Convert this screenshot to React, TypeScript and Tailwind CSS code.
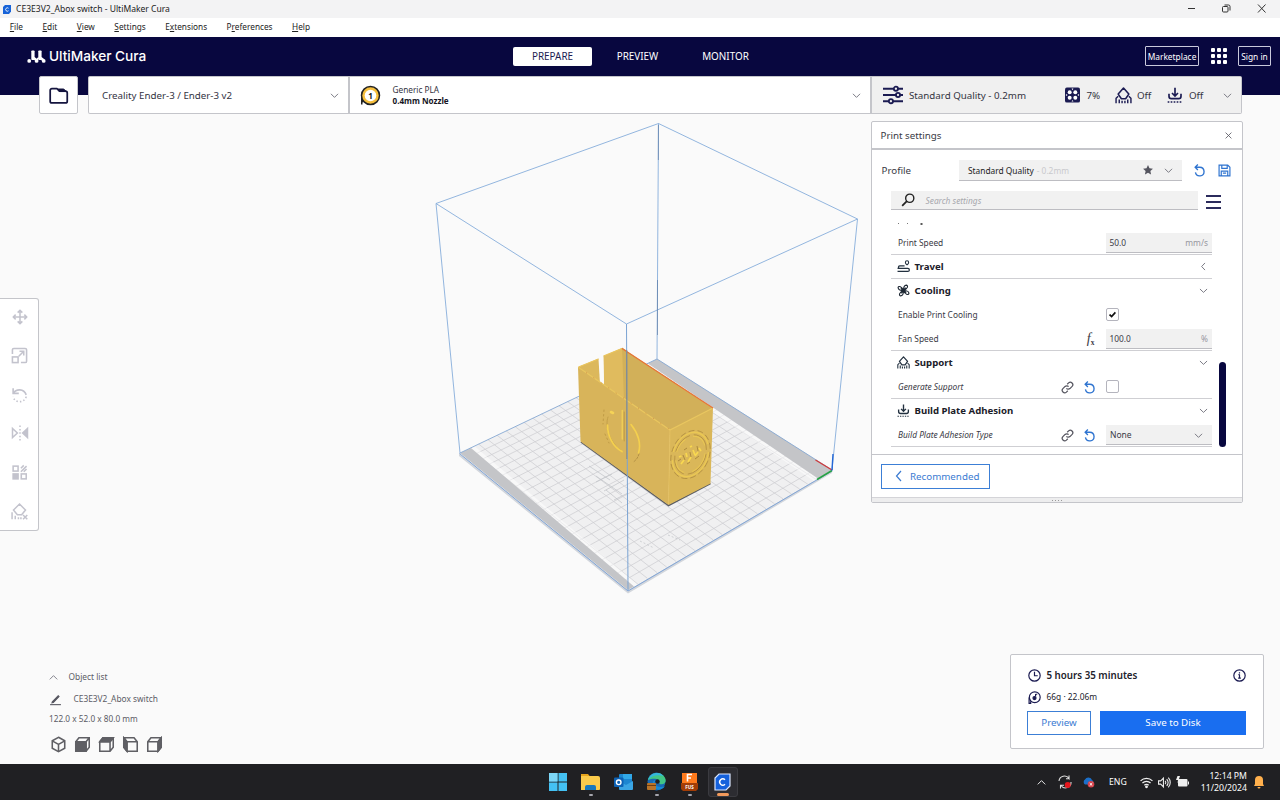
import type { ReactNode } from 'react';

type Pt = [number, number];

/* ---------- build plate projection ---------- */
const L: Pt = [460, 453];
const B: Pt = [657, 359];
const R: Pt = [832, 470];
const F: Pt = [628, 590];

const dx1 = B[0] - R[0], dx2 = F[0] - R[0], dx3 = L[0] - B[0] + R[0] - F[0];
const dy1 = B[1] - R[1], dy2 = F[1] - R[1], dy3 = L[1] - B[1] + R[1] - F[1];
const det = dx1 * dy2 - dx2 * dy1;
const g = (dx3 * dy2 - dx2 * dy3) / det;
const h = (dx1 * dy3 - dx3 * dy1) / det;
const proj = (u: number, v: number): Pt => {
  const w = g * u + h * v + 1;
  return [
    ((B[0] - L[0] + g * B[0]) * u + (F[0] - L[0] + h * F[0]) * v + L[0]) / w,
    ((B[1] - L[1] + g * B[1]) * u + (F[1] - L[1] + h * F[1]) * v + L[1]) / w,
  ];
};
const seg = (a: Pt, b: Pt) => `M${a[0].toFixed(1)} ${a[1].toFixed(1)}L${b[0].toFixed(1)} ${b[1].toFixed(1)}`;

const N = 23;
const gridPath = Array.from({ length: N - 1 }, (_, i) => (i + 1) / N)
  .map((t) => seg(proj(t, 0), proj(t, 1)) + seg(proj(0, t), proj(1, t)))
  .join('');

function Scene() {
  return (
    <svg className="absolute left-0 top-0" width="1280" height="764" viewBox="0 0 1280 764">
      <polygon points="459,453 628,590 832,470 832,473 628,593.500 459,456" fill="#d2d6dc" />
      <polygon points="460,453 657,359 832,470 628,590" fill="#f0f0f1" />
      <path d={gridPath} stroke="#cdced1" strokeWidth=".75" fill="none" />
      <polygon points="471,448.500 475,446.500 637.500,584.500 634,586.500" fill="#ffffff" opacity=".5" />
      <polygon points="648,363.500 644,365.500 814,481 818,478.500" fill="#ffffff" opacity=".5" />
      <polygon points="460,453 471,448 634,586.500 628,590" fill="#c4c5c8" />
      <polygon points="657,359 648,363.500 818,478.500 832,470" fill="#c4c5c8" />
      <path d="M460 453L657 359L832 470" stroke="#86a8d3" strokeWidth=".9" fill="none" />

      <g stroke="#7fa9d9" strokeWidth=".85" fill="none">
        <path d="M436 203.500L658.500 123.500L857.500 219L626.500 324Z" />
        <path d="M436 203.500L460 453M857.500 219L832 470" />
        <path d="M658.500 123.500L657 359" />
      </g>
      <path d="M658.400 125V160M657.500 280V335" stroke="#4f6f99" strokeWidth=".8" opacity=".7" />

      {/* contact shadow on the plate */}
      <g stroke="#bfc1c6" strokeWidth=".7" fill="none">
        <path d="M589 466L610 480M596 476L622 494M606 490L622 503M596 482L612 474M604 491L624 480M614 500L628 493" />
        <path d="M640 541L654 548M668 535L680 540" strokeDasharray="2 2" />
      </g>
      <path d="M581 442L668.500 505.500L710.500 483.500" stroke="#5a5c62" strokeWidth="1.500" fill="none" />

      {/* inner walls */}
      <polygon points="578.500,367 598.500,358.500 600,384 578.500,370" fill="#dcb85c" />
      <polygon points="603.500,356 622,348 626,352 626,402 604,388" fill="#e0bb5e" />
      <polygon points="622,348 713,408 670,431 624,402" fill="#d2b059" />
      <polygon points="599,359 603,357 604,385 600.500,382.500" fill="#fafafa" />
      <path d="M622 348L626.500 351V400" stroke="#bd9b4c" strokeWidth=".9" fill="none" />

      {/* outer faces */}
      <polygon points="578,367 670,430 668.500,505 580.500,441.500" fill="#d8b45a" />
      <polygon points="670,430 713,408 710.500,483.500 668.500,505" fill="#dab759" />
      <path d="M578.300 367.300L670 430L713 408" stroke="#e9c65f" strokeWidth="1.300" fill="none" />
      <path d="M578.500 367L598.500 359M603.500 356L622 348.500" stroke="#e9c45d" strokeWidth="1.300" fill="none" />
      <path d="M670 430L668.500 504" stroke="#e4c060" strokeWidth=".9" />
      <path d="M622 348.500L713 408" stroke="#e77438" strokeWidth="1.300" />
      <path d="M586 372.500L669 429" stroke="#b8502c" strokeWidth=".7" strokeDasharray="1 8" opacity=".6" />

      {/* power symbol */}
      <g fill="none" strokeLinecap="round">
        <path d="M608 417C604.500 426 610 443 621 450.500" stroke="#c09c46" strokeWidth=".9" />
        <path d="M607.500 425C607.500 436 613 447 622 451.500" stroke="#f4d04e" strokeWidth="1.700" />
        <path d="M631 424.500C638 433 641.500 444 638.500 453" stroke="#f4d04e" strokeWidth="1.600" />
        <path d="M639 454Q637.500 459 634 461.500" stroke="#a98840" strokeWidth=".8" strokeDasharray="2 1.500" />
        <path d="M622.300 410.500V439" stroke="#efcd57" strokeWidth="1.500" />
        <path d="M624.200 412V441" stroke="#ba9743" strokeWidth=".9" />
        <path d="M611 412L613 413" stroke="#f5d357" strokeWidth="2.600" />
        <path d="M604 410L603 424M605 434L609 443" stroke="#b99440" strokeWidth=".8" strokeDasharray="1.500 3" />
      </g>

      {/* round emblem */}
      <g fill="none" transform="rotate(24 690.500 454.500)">
        <ellipse cx="690.500" cy="454.500" rx="18.500" ry="25" stroke="#b08d40" strokeWidth=".8" strokeDasharray="6 3" />
        <ellipse cx="690.500" cy="454.500" rx="17" ry="23" stroke="#ebc853" strokeWidth="1.400" strokeDasharray="50 8" />
        <ellipse cx="690.500" cy="454.500" rx="14.800" ry="20.500" stroke="#b5913f" strokeWidth=".8" strokeDasharray="22 4" />
        <ellipse cx="690.500" cy="454.500" rx="13.800" ry="19" stroke="#ebc853" strokeWidth=".9" strokeDasharray="16 8" />
      </g>
      <path d="M679 457l2.500-1M681 464l3-4M686 453l1 4M688 462l3-5M693 450l2 5M695 456l3-4M699 448l2 3M690 447l2-1" stroke="#f9d850" strokeWidth="1.700" fill="none" />
      <path d="M678 461l3-2M683 455l2 5M687 464l3-2M690 452l1 5M695 459l4-3M697 446l1 5M684 450l3-2" stroke="#a17f37" strokeWidth=".8" fill="none" />

      {/* front edge, origin axes */}
      <path d="M626.500 324L628 590" stroke="#7aa3d3" strokeWidth="1" />
      <path d="M626.800 350V459" stroke="#77777a" strokeWidth="1" opacity=".65" />
      <path d="M459.500 453.500L628 591L832 471" stroke="#779fd6" strokeWidth=".9" fill="none" />
      <path d="M832 470L815.500 460" stroke="#d13a3a" strokeWidth="1.300" />
      <path d="M832 470.500L817 479.500" stroke="#27a344" strokeWidth="1.500" />
      <path d="M832 470.500L833 454" stroke="#2467d6" strokeWidth="1.400" />
    </svg>
  );
}

/* ---------- icons ---------- */
function Icon({ size = 12, w = 1.5, vb = 24, color = 'currentColor', className = '', children }: {
  size?: number; w?: number; vb?: number; color?: string; className?: string; children: ReactNode;
}) {
  return (
    <svg className={`shrink-0 ${className}`} width={size} height={size} viewBox={`0 0 ${vb} ${vb}`} fill="none" stroke={color} strokeWidth={w}>
      {children}
    </svg>
  );
}
const ChevDown = ({ size = 9, className = '' }) => (
  <Icon size={size} w={2.4} color="#6d6d78" className={className}><path d="M2.500 7.500l9.500 9.500 9.500-9.500" /></Icon>
);
const SupportIcon = ({ size = 18, color = '#1b1b52' }) => (
  <Icon size={size} w={2.2} color={color}>
    <path d="M12 1.500l7.500 8.500-4.500 6.500H9L4.500 10z" strokeLinejoin="round" />
    <path d="M1.500 23v-7l3-3M22.500 23v-7l-3-3M6 17.500V23M10 19.500V23M14 19.500V23M18 17.500V23" strokeWidth="2" />
  </Icon>
);
const AdhesionIcon = ({ size = 18, color = '#1b1b52' }) => (
  <Icon size={size} w={2.5} color={color}>
    <path d="M12 1v12M7.500 9L12 13.500 16.500 9M3 10v4q0 3.500 3.500 3.500h11q3.500 0 3.500-3.500v-4" />
    <path d="M1 22.500h22" strokeDasharray="2.500 2" strokeWidth="2" />
  </Icon>
);
const Reset = ({ size = 13, color = '#2f74d0' }) => (
  <Icon size={size} w={2.5} color={color}>
    <path d="M9 1L4 6 9 11M4.500 6H12.500a8 8 0 1 1-8 9.500" />
  </Icon>
);
const LinkIcon = () => (
  <Icon size={13} w={2.3} color="#55555f">
    <path d="M10 13.500a4.500 4.500 0 0 0 6.500.5l4-4a4.600 4.600 0 0 0-6.500-6.500l-2.500 2.500M14 10.500a4.500 4.500 0 0 0-6.500-.5l-4 4A4.600 4.600 0 0 0 10 20.500l2.500-2.500" />
  </Icon>
);
const TravelIcon = () => (
  <Icon size={13} w={2.4} color="#22303f">
    <path d="M18.500 9c-2-1.500-3-2.500-3-4.500a3 3 0 0 1 6 0c0 2-1 3-3 4.500z" strokeWidth="2" />
    <path d="M14 11H5a2.200 2.200 0 0 0 0 4.500h15a2.500 2.500 0 0 1 0 5.500H1M1 15.500h5" />
  </Icon>
);
const FanIcon = () => (
  <Icon size={13} w={2.1} color="#1d2733">
    <path d="M12 12C7 12 2 11 2 6.500 3 3 9 4 12 12zM12 12c0-5 1-10 5.500-10C21 3 20 9 12 12zM12 12c5 0 10 1 10 5.500-1 3.500-7 2.500-10-5.500zM12 12c0 5-1 10-5.500 10C3 21 4 15 12 12z" />
    <path d="M7 8l10 8M16 7L8 17" strokeWidth="2.600" />
  </Icon>
);

/* ---------- top area ---------- */
const menus: [string, string, string][] = [
  ['', 'F', 'ile'], ['', 'E', 'dit'], ['', 'V', 'iew'], ['', 'S', 'ettings'],
  ['E', 'x', 'tensions'], ['P', 'r', 'eferences'], ['', 'H', 'elp'],
];

function WindowChrome() {
  return (
    <>
      <div className="flex h-[18px] items-center bg-[#f3f3f4] pl-[3px] text-[8.550px] text-[#222]">
        <svg width="8" height="9" viewBox="0 0 16 18"><path d="M4 0h12v13l-4 5H0V4z" fill="#1763d8" /><path d="M11 6.500a3.400 3.400 0 1 0 0 5" stroke="#fff" strokeWidth="1.800" fill="none" /></svg>
        <span className="ml-[5px]">CE3E3V2_Abox switch - UltiMaker Cura</span>
        <div className="ml-auto flex w-[92px] items-center pb-px">
          <svg width="78" height="9" viewBox="0 0 78 9" fill="none" stroke="#333" strokeWidth="1">
            <path d="M0 4.500h7M70 .5l7.500 8M77.500 .5l-7.500 8" />
            <rect x="34.500" y="2.500" width="5.500" height="5.500" rx="1" /><path d="M36.500 1h4a1.500 1.500 0 0 1 1.500 1.500v4" />
          </svg>
        </div>
      </div>
      <div className="flex h-[19px] items-center gap-[19.500px] bg-white pl-[9.800px] text-[8.250px] text-[#222]">
        {menus.map(([a, b, c]) => (
          <span key={b + c}>{a}<u className="underline-offset-1">{b}</u>{c}</span>
        ))}
      </div>
    </>
  );
}

function Header() {
  return (
    <div className="flex h-[58px] items-start bg-[#08073f] text-white">
      <div className="flex h-[39px] w-[513px] items-center pl-[27px]">
        <svg width="19" height="13" viewBox="0 0 19 13" fill="#fff">
          <circle cx="2.200" cy="10.900" r="1.900" />
          <circle cx="9.600" cy="10.900" r="1.900" />
          <circle cx="16.700" cy="10.900" r="1.900" />
          <rect x="4.300" y=".5" width="3.300" height="9.500" rx=".8" />
          <rect x="11.300" y=".5" width="3.300" height="9.500" rx=".8" />
          <path d="M5 8.500l2.600-1.500 3 2.500-1 2zM12 8.500l2.600-1.500 2.800 2.300-1 2.500zM8.800 9.500l2.500-2.500.8 1.500-1.600 2z" />
        </svg>
        <span className="ml-[3px] font-['Inter',sans-serif] text-[13.650px] font-medium tracking-[-0.020px]">UltiMaker Cura</span>
      </div>
      <div className="flex h-[39px] items-center text-[9.900px]">
        <span className="flex h-[19px] w-[79px] items-center justify-center rounded-[2px] bg-white text-[#1b1b52]">PREPARE</span>
        <span className="flex w-[91px] justify-center">PREVIEW</span>
        <span className="flex w-[85px] justify-center">MONITOR</span>
      </div>
      <div className="ml-auto flex h-[38px] items-center pr-[9px] text-[8.400px]">
        <span className="flex h-[20px] w-[54px] items-center justify-center rounded-[1px] border border-[#c9c9dc] pt-[2px]">Marketplace</span>
        <div className="ml-[12px] grid grid-cols-3 gap-[2px]">
          {Array.from({ length: 9 }, (_, i) => <i key={i} className="size-[4px] rounded-[1px] bg-white" />)}
        </div>
        <span className="ml-[11px] flex h-[20px] w-[33px] items-center justify-center rounded-[1px] border border-[#c9c9dc] pt-[2px]">Sign in</span>
      </div>
    </div>
  );
}

function Toolbar() {
  return (
    <div className="relative -mt-[19px] ml-[39px] flex h-[38px] w-[1203px] text-[9.750px] text-[#33333f]">
      <div className="flex w-[39px] items-center justify-center rounded-[2px] border border-[#c4c5ca] bg-white">
        <Icon size={21} w={2} color="#15153f"><path d="M2.500 6a2 2 0 0 1 2-2H10l3 3h7a2 2 0 0 1 2 2v9.500a2 2 0 0 1-2 2H4.500a2 2 0 0 1-2-2z" /><path d="M10.500 4.500h7.500l3 3h-7.500z" fill="#15153f" strokeWidth="1" /></Icon>
      </div>
      <div className="ml-[9.500px] flex w-[262px] items-center rounded-l-[2px] border border-r-2 border-[#c4c5ca] bg-white pl-[13.500px] pr-[9px]">
        <span className="pt-[2px]">Creality Ender-3 / Ender-3 v2</span><ChevDown className="ml-auto" />
      </div>
      <div className="flex w-[522px] items-center border-y border-r-2 border-[#c4c5ca] bg-white pl-[10px] pr-[8.500px]">
        <svg width="21" height="21" viewBox="0 0 21 21">
          <path d="M1 19.500V10h3v6.500L2.500 17.500v2z" fill="#222" /><circle cx="10.500" cy="10.500" r="9" fill="#f6bf3c" stroke="#222" strokeWidth="1.500" />
          <circle cx="10.500" cy="10.500" r="5.800" fill="#fff" /><text x="10.500" y="13.500" textAnchor="middle" fontSize="8" fontWeight="700" fill="#111">1</text>
        </svg>
        <div className="ml-[12px] flex flex-col text-[8.250px] leading-[11px]"><span>Generic PLA</span><b className="text-[8.100px] text-[#15151f]">0.4mm Nozzle</b></div>
        <ChevDown className="ml-auto" />
      </div>
      <div className="flex flex-1 items-center rounded-r-[2px] border border-l-0 border-[#c4c5ca] bg-[#f0f0f0] pl-[11px] pr-[9.500px]">
        <Icon size={20} w={2.2} color="#1b1b52"><path d="M0 4.500h13M18 4.500h6M0 12h16M20.500 12H24M0 19.500h7M12 19.500h12" /><circle cx="15.500" cy="4.500" r="2.500" /><circle cx="18" cy="12" r="2.500" /><circle cx="9.500" cy="19.500" r="2.500" /></Icon>
        <span className="ml-[6.500px] pt-[2px]">Standard Quality - 0.2mm</span>
        <div className="ml-auto flex items-center">
          <svg width="15" height="16" viewBox="0 0 16 16"><rect width="16" height="16" rx="2" fill="#1b1b52" /><g fill="#fff"><circle cx="5" cy="5" r="2.100" /><circle cx="11" cy="5" r="2.100" /><circle cx="5" cy="11" r="2.100" /><circle cx="11" cy="11" r="2.100" /><path d="M7 1h2L8 2.800zM7 15h2l-1-1.800zM1 7v2l1.800-1zM15 7v2l-1.800-1z" /></g></svg>
          <span className="ml-[6.500px] w-[28px] pt-[2px]">7%</span>
          <SupportIcon size={17} /><span className="ml-[5.500px] w-[30px] pt-[2px]">Off</span>
          <AdhesionIcon size={16} /><span className="ml-[6px] w-[33.500px] pt-[2px]">Off</span>
          <ChevDown />
        </div>
      </div>
    </div>
  );
}

/* ---------- left tool strip ---------- */
function ToolStrip() {
  const c = '#c3c3cd';
  return (
    <div className="mt-[184px] flex h-[233px] w-[39px] flex-col items-center justify-between rounded-r-[3px] border border-l-0 border-[#c4c5ca] bg-white py-[10px] pl-px">
      <Icon size={16} w={2.3} color={c}><path d="M12 2v20M2 12h20M8.500 5.500L12 2l3.500 3.500M8.500 18.500L12 22l3.500-3.500M5.500 8.500L2 12l3.500 3.500M18.500 8.500L22 12l-3.500 3.500" /></Icon>
      <Icon size={17} w={2.2} color={c}><path d="M2 10V4a2 2 0 0 1 2-2h16a2 2 0 0 1 2 2v16a2 2 0 0 1-2 2h-6" /><rect x="2" y="14" width="8" height="8" /><path d="M11 13l7-7M12 6h6v6" /></Icon>
      <Icon size={17} w={2.3} color={c}><path d="M3 3v7.500h8M3.500 10C7 4 18 3 21.500 12.500" /><path d="M21.500 15C19 24 6 25 2.500 15" strokeDasharray="2 3" /></Icon>
      <Icon size={18} w={2} color={c}><path d="M2 6v12l6.500-6z" /><path d="M22 6v12l-6.500-6z" fill={c} /><path d="M12 2v20" strokeDasharray="2 2.500" /></Icon>
      <Icon size={17} w={2.2} color={c}><rect x="3" y="3" width="7" height="7" /><rect x="3" y="14" width="7" height="7" fill={c} /><rect x="14.500" y="14" width="7" height="7" /><path d="M14 6l4-4M14 11l8-8M18 11l4-4" /></Icon>
      <Icon size={17} w={2.1} color={c}><path d="M12 1.500l8.500 8.500-5.500 6.500H9L3.500 10z" /><path d="M1.500 13v10M6 18v5M10.500 20v3M14 20v3M17 17l6 6M23 17l-6 6" /></Icon>
    </div>
  );
}

function ObjectInfo() {
  const hex = 'M12 1.800l8.800 5v10.400l-8.800 5-8.800-5V6.800z';
  const box = 'M2.500 8L7 2.500h14.500V16L17 21.500H2.500zM2.500 8H17v13.500M17 8l4.500-5.500';
  const c = '#5f5f64';
  return (
    <div className="ml-[49px] mt-auto flex flex-col pb-[12px] text-[8.350px] text-[#5c5c66]">
      <div className="flex h-[22px] items-center"><Icon size={9} w={2.200} color="#6d6d78"><path d="M2 17l10-10 10 10" /></Icon><span className="ml-[10.500px]">Object list</span></div>
      <div className="flex h-[22px] items-center"><Icon size={13} w={2} color="#55555f"><path d="M2 21.500h20" /><path d="M6 16.500L17 5l1.500 1.500L8 17.500l-2.500.500z" fill="#55555f" /></Icon><span className="ml-[11.500px]">CE3E3V2_Abox switch</span></div>
      <div className="flex h-[18px] items-center text-[8.250px]">122.0 x 52.0 x 80.0 mm</div>
      <div className="ml-px mt-[8px] flex h-[16px] items-center gap-[7px]">
        <Icon size={17} w={2.200} color={c}><path d={hex} /><path d="M3.200 6.800l8.800 5 8.800-5M12 11.800v10" /></Icon>
        <Icon size={17} w={2.200} color={c}><path d="M2.500 8H17v13.500H2.500z" fill={c} /><path d={box} /></Icon>
        <Icon size={17} w={2.200} color={c}><path d="M2.500 8L7 2.500h14.500L17 8z" fill={c} /><path d={box} /></Icon>
        <Icon size={17} w={2.200} color={c}><path d="M2.500 2.500H17L21.500 8v13.500H7L2.500 16zM7 21.500V8h14.500M7 8L2.500 2.500" /><path d="M2.500 2.500L7 8v13.500L2.500 16z" fill={c} /></Icon>
        <Icon size={17} w={2.200} color={c}><path d="M17 8l4.500-5.500V16L17 21.500z" fill={c} /><path d={box} /></Icon>
      </div>
    </div>
  );
}

/* ---------- print settings ---------- */
const rowCls = 'flex h-[24px] items-center';
function Group({ icon, title, open = true, line = false }: { icon: ReactNode; title: string; open?: boolean; line?: boolean }) {
  return (
    <div className={`${rowCls} border-b pl-[5.500px] pr-[4px] ${line ? 'border-[#cfcfd3]' : 'border-transparent'}`}>
      {icon}<b className="ml-[5px] pt-px text-[9.650px] text-[#1b2029]">{title}</b>
      <Icon size={9} w={2.4} color="#6d6d78" className="ml-auto"><path d={open ? 'M2.500 8l9.500 9 9.500-9' : 'M16 2.500L7 12l9 9.500'} /></Icon>
    </div>
  );
}
function Setting({ label, italic = false, extra, line = false, children }: { label: string; italic?: boolean; extra?: ReactNode; line?: boolean; children: ReactNode }) {
  return (
    <div className={`${rowCls} border-b pl-[7px] ${line ? 'border-[#cfcfd3]' : 'border-transparent'}`}>
      <span className={`pt-[2px] ${italic ? 'italic' : ''}`}>{label}</span>
      <div className="ml-auto flex items-center gap-[9.500px] pr-[9px] pt-px">{extra}</div>
      <div className="flex w-[107px] items-center pl-[.5px]">{children}</div>
    </div>
  );
}
const Field = ({ value, unit }: { value: string; unit: string }) => (
  <div className="flex h-[20px] w-full items-center justify-between border-b-[1.500px] border-[#bdbdc2] bg-[#f1f1f1] pl-[4px] pr-[4px] pt-[2px]">
    <span>{value}</span><span className="text-[#97979f]">{unit}</span>
  </div>
);
const Check = ({ on = false }) => (
  <span className="flex size-[13px] items-center justify-center rounded-[2px] border border-[#b4b4bd] bg-white">
    {on && <Icon size={7} w={6} color="#111"><path d="M2 12l7 7L22 5" /></Icon>}
  </span>
);

function PrintSettings() {
  return (
    <div className="mt-[7px] flex h-[382px] w-[372px] flex-col rounded-[2px] border border-[#c4c5ca] bg-white text-[8.350px] text-[#3a3a45]">
      <div className="flex h-[28px] items-center border-b-2 border-[#c4c5ca] pl-[8.500px] pr-[10px] text-[9.750px]">
        <span className="pt-[2px]">Print settings</span>
        <Icon size={7} w={2.800} color="#55555f" className="ml-auto"><path d="M2 2l20 20M22 2L2 22" /></Icon>
      </div>
      <div className="mt-[10px] flex h-[21px] items-center pl-[9.500px]">
        <span className="w-[77.500px] pt-[2px] text-[9.750px]">Profile</span>
        <div className="flex h-[21px] w-[223px] items-center border-b border-[#bdbdc2] bg-[#f1f1f1] pl-[9px] pr-[9.500px]">
          <span className="pt-[2px] text-[8.350px] text-[#222]">Standard Quality</span><span className="ml-[3px] pt-[2px] text-[8.350px] text-[#c9c9cd]">- 0.2mm</span>
          <svg className="ml-auto" width="10" height="9.500" viewBox="0 0 24 23"><path d="M12 0l3.600 7.800 8.400 1-6.200 5.800 1.600 8.400L12 18.900 4.600 23l1.600-8.400L0 8.800l8.400-1z" fill="#55555f" /></svg>
          <ChevDown className="ml-[11px]" />
        </div>
        <div className="ml-[11px] flex items-center gap-[11.500px]"><Reset />
          <Icon size={13} w={2.200} color="#2f74d0"><path d="M2 2h16l4 4v16H2zM7 2v6h10V2M6 22v-9h12v9M9 17h6" /></Icon></div>
      </div>
      <div className="mt-[10px] flex h-[19px] items-center pl-[19px]">
        <div className="flex h-[19px] w-[307px] items-center border-b border-[#bdbdc2] bg-[#f1f1f1] pl-[10px]">
          <Icon size={14} w={2.400} color="#222"><circle cx="15" cy="9" r="7" /><path d="M10 14l-8 8" strokeWidth="3" /></Icon>
          <span className="ml-[10.500px] pt-[2px] italic text-[#a8a8ae]">Search settings</span>
        </div>
        <div className="ml-[8px] mt-[2px] flex w-[15px] flex-col gap-[4px]"><i className="h-[2px] bg-[#2b2b5c]" /><i className="h-[2px] bg-[#2b2b5c]" /><i className="h-[2px] bg-[#2b2b5c]" /></div>
      </div>
      <div className="flex flex-1 pl-[19px]">
        <div className="w-[321px]">
          <svg className="block" width="40" height="21" viewBox="0 0 40 21"><path d="M7 13.500h1M16 13.500h1" stroke="#777" /><path d="M29.500 14h2" stroke="#222" strokeWidth="1.500" /></svg>
          <Setting label="Print Speed" line><Field value="50.0" unit="mm/s" /></Setting>
          <Group icon={<TravelIcon />} title="Travel" open={false} line />
          <Group icon={<FanIcon />} title="Cooling" />
          <Setting label="Enable Print Cooling"><Check on /></Setting>
          <Setting label="Fan Speed" line extra={<span className="pr-[1.500px] font-['Liberation_Serif',serif] text-[14px] italic leading-none">f<sub className="text-[7.500px] font-bold not-italic">x</sub></span>}><Field value="100.0" unit="%" /></Setting>
          <Group icon={<SupportIcon size={13} color="#22303f" />} title="Support" />
          <Setting label="Generate Support" italic line extra={<><LinkIcon /><Reset /></>}><Check /></Setting>
          <Group icon={<AdhesionIcon size={13} color="#22303f" />} title="Build Plate Adhesion" />
          <Setting label="Build Plate Adhesion Type" italic line extra={<><LinkIcon /><Reset /></>}>
            <div className="flex h-[20px] w-full items-center justify-between border-b border-[#bdbdc2] bg-[#f1f1f1] pl-[4.500px] pr-[9px] pt-[2px] text-[8.500px]"><span>None</span><ChevDown /></div>
          </Setting>
        </div>
        <i className="ml-[7px] mt-[152px] h-[85px] w-[7px] rounded-full bg-[#08073f]" />
      </div>
      <div className="flex h-[43px] items-center border-t border-[#c4c5ca] pl-[9px]">
        <div className="flex h-[25px] w-[109px] items-center border border-[#3c7fd6] pl-[11px] text-[9.750px] text-[#3b7bd2]">
          <Icon size={12} w={2.400}><path d="M16 2L7 12l9 10" /></Icon><span className="ml-[5px] pt-[2px]">Recommended</span>
        </div>
      </div>
      <div className="flex h-[5px] items-center justify-center gap-[2px] border-t border-[#d4d4d8] bg-[#ededee]">
        {[0, 1, 2, 3].map((i) => <i key={i} className="size-px bg-[#999]" />)}
      </div>
    </div>
  );
}

function SavePanel() {
  return (
    <div className="mb-[15px] ml-[139px] mt-auto flex h-[95px] w-[254px] flex-col rounded-[2px] border border-[#c4c5ca] bg-white pl-[16px] pr-[17px] pt-[10px] text-[#22222c]">
      <div className="flex h-[20px] items-center pl-px">
        <Icon size={13} w={2.200} color="#1b1b52"><circle cx="12" cy="12" r="10.500" /><path d="M12 5v7.500h6" /></Icon>
        <b className="ml-[5.500px] pt-[2px] text-[9.750px] font-semibold">5 hours 35 minutes</b>
        <Icon size={13} w={2.200} color="#1b1b52" className="ml-auto"><circle cx="12" cy="12" r="10.500" /><path d="M12 10v7.500M12 6v2.500M10 10.500h2M9.500 17h5" /></Icon>
      </div>
      <div className="mt-[3px] flex h-[18px] items-center pl-px text-[8.400px]">
        <Icon size={13} w={2.200} color="#1b1b52"><path d="M2 12v11h3v-4" /><circle cx="12.500" cy="11.500" r="10" /><circle cx="12" cy="13" r="2.800" fill="#1b1b52" /><path d="M14 10V5.500M14 6h3" /></Icon>
        <span className="ml-[5.500px] pt-px">66g · 22.06m</span>
      </div>
      <div className="mt-[5px] flex h-[24px] justify-between text-[9.750px]">
        <span className="flex w-[64px] items-center justify-center border border-[#3c7fd6] pt-px text-[#3b7bd2]">Preview</span>
        <span className="flex w-[146px] items-center justify-center bg-[#196ef0] pt-px text-white">Save to Disk</span>
      </div>
    </div>
  );
}

/* ---------- taskbar ---------- */
function Taskbar() {
  const slot = 'flex h-[31px] w-[33px] flex-col items-center justify-end gap-[3px] pb-[1px]';
  const dot = <i className="h-[2px] w-[4px] rounded-full bg-[#a5a5ad]" />;
  const none = <i className="h-[2px]" />;
  return (
    <div className="relative flex h-[36px] items-center bg-[#202023] text-white">
      <div className="ml-[541px] flex h-full items-center pb-px">
        <div className={slot}><svg width="18" height="18" viewBox="0 0 18 18" fill="#44c1f3"><path d="M0 0h8.500v8.500H0zM9.500 0H18v8.500H9.500zM0 9.500h8.500V18H0zM9.500 9.500H18V18H9.500z" /><path d="M0 0h8.500v8.500H0z" fill="#7cd7f8" /></svg>{none}</div>
        <div className={slot}><svg width="19" height="18" viewBox="0 0 19 18"><path d="M0 1h7l2 2.500H0z" fill="#e6a41c" /><path d="M0 3h17a2 2 0 0 1 2 2v11a1 1 0 0 1-1 1H0z" fill="#fbcb4b" /><path d="M4 17v-3a2 2 0 0 1 2-2h7a2 2 0 0 1 2 2v3z" fill="#1878bd" /></svg>{dot}</div>
        <div className={slot}><svg width="19" height="18" viewBox="0 0 19 18"><rect x="5" y="1" width="13" height="12" rx="1" fill="#1c86d1" /><path d="M9 1h9v5H9z" fill="#31a8e8" /><path d="M5 8l7 4 7-4v8a1 1 0 0 1-1 1H6a1 1 0 0 1-1-1z" fill="#3aa5e4" /><rect x="0" y="4.500" width="9.500" height="9.500" rx="1" fill="#0d62b5" /><circle cx="4.700" cy="9.300" r="2.300" fill="none" stroke="#fff" strokeWidth="1.400" /></svg>{none}</div>
        <div className={slot}><svg width="19" height="19" viewBox="0 0 19 19"><circle cx="9.500" cy="9.500" r="9" fill="#1769b5" /><path d="M1 8C3 0 15-2 18.500 7c1 4-2 6-6 5 1-4-4-7-11.500-4z" fill="#42c686" /><path d="M1 8C4-1 14 0 16 4 10 2 4 4 1 8z" fill="#35b6df" /><path d="M9 8c-3 2-1 7 5 7 2 0 4-1 4-1-3 5-10 5-12 0-1-3 0-6 3-6z" fill="#1489d4" /><circle cx="10.500" cy="9.500" r="2.200" fill="#202023" /><rect x="0" y="11" width="9" height="7" rx="1" fill="#b87329" /><path d="M0 13.500h9" stroke="#6e3d10" /></svg>{dot}</div>
        <div className={slot}><svg width="17" height="19" viewBox="0 0 17 19"><path d="M1 1h15v13H1z" fill="#ff7a1c" /><path d="M0 11h17v6l-2 2H2l-2-2z" fill="#a33d06" /><path d="M6.500 9.500v-7H11M6.500 6H10" stroke="#fff" strokeWidth="1.600" fill="none" /><text x="8.500" y="16.800" fontSize="4.500" fontWeight="700" textAnchor="middle" fill="#fff">FUS</text></svg>{dot}</div>
        <div className="ml-[1.500px] flex h-[30px] w-[30px] flex-col items-center justify-end gap-[2px] rounded-[3px] border border-[#3b3b40] bg-[#2c2c31]"><svg width="17" height="18" viewBox="0 0 17 18"><path d="M5 1h11v12l-4 4H1V5z" fill="#1561dc" stroke="#dce8ff" strokeWidth="1.200" /><path d="M11 6.800a3.100 3.100 0 1 0 0 4.400" stroke="#fff" strokeWidth="1.400" fill="none" /></svg><i className="h-[2.500px] w-[12px] rounded-full bg-[#f39a5b]" /></div>
      </div>
      <div className="ml-auto flex items-center pr-[16px] text-[8.700px]">
        <Icon size={9} w={2.600} color="#eee"><path d="M2 17l10-10 10 10" /></Icon>
        <svg className="ml-[12.500px]" width="14" height="14" viewBox="0 0 14 14"><path d="M1 6a5.500 5.500 0 0 1 10-2.500V.5M11.500 3.700H8M13 7a5.500 5.500 0 0 1-10 3.500M2.500 13.500v-3.200H6" stroke="#ddd" strokeWidth="1.100" fill="none" /><circle cx="9.700" cy="10" r="3" fill="#e5161d" /></svg>
        <svg className="ml-[10px]" width="13" height="12" viewBox="0 0 13 12"><path d="M3 8.500a3 3 0 0 1 0-5 3.800 3.800 0 0 1 7 .5 2.500 2.500 0 0 1 0 4.500z" fill="#1b6fc9" /><circle cx="9" cy="8.300" r="3.300" fill="#d6424b" /><path d="M7.700 7l2.600 2.600M10.300 7L7.700 9.600" stroke="#fff" /></svg>
        <span className="ml-[14px] w-[19px] pt-px">ENG</span>
        <Icon size={13} w={2.200} color="#eee" className="ml-[12px]"><path d="M1 9a15.500 15.500 0 0 1 22 0M4.500 13a10.500 10.500 0 0 1 15 0M8 17a5.600 5.600 0 0 1 8 0" /><circle cx="12" cy="20" r="1.500" fill="#eee" /></Icon>
        <Icon size={13} w={2} color="#eee" className="ml-[5px]"><path d="M1 9h4l5-5v16l-5-5H1zM13 9a4 4 0 0 1 0 6M16 6a8 8 0 0 1 0 12M19 3a13 13 0 0 1 0 18" /></Icon>
        <svg className="ml-[5px]" width="13" height="12" viewBox="0 0 13 12"><rect x="2" y="3" width="9.500" height="7.500" rx="1" fill="#eee" /><path d="M12 5.500h1v3h-1zM1.500 0L0 4h2l-.5 3L5 3H3l1-3z" fill="#eee" /></svg>
        <div className="ml-[10px] flex w-[48px] flex-col items-end leading-[12px]"><span>12:14 PM</span><span>11/20/2024</span></div>
        <svg className="ml-[7px]" width="10" height="13" viewBox="0 0 10 13"><path d="M5 0a4 4 0 0 1 4 4v4l1 2H0l1-2V4a4 4 0 0 1 4-4zM3.500 11h3a1.500 1.500 0 0 1-3 0z" fill="#ffb04d" /></svg>
      </div>
    </div>
  );
}

export default function App() {
  return (
    <div className="relative flex h-[800px] w-[1280px] flex-col overflow-hidden whitespace-nowrap bg-[#fafafa] font-['Noto_Sans',sans-serif]">
      <Scene />
      <div className="relative flex min-h-0 flex-1 flex-col">
        <WindowChrome />
        <Header />
        <Toolbar />
        <div className="flex min-h-0 flex-1 justify-between">
          <div className="flex flex-col"><ToolStrip /><ObjectInfo /></div>
          <div className="flex w-[409px] flex-col"><PrintSettings /><SavePanel /></div>
        </div>
      </div>
      <Taskbar />
    </div>
  );
}
